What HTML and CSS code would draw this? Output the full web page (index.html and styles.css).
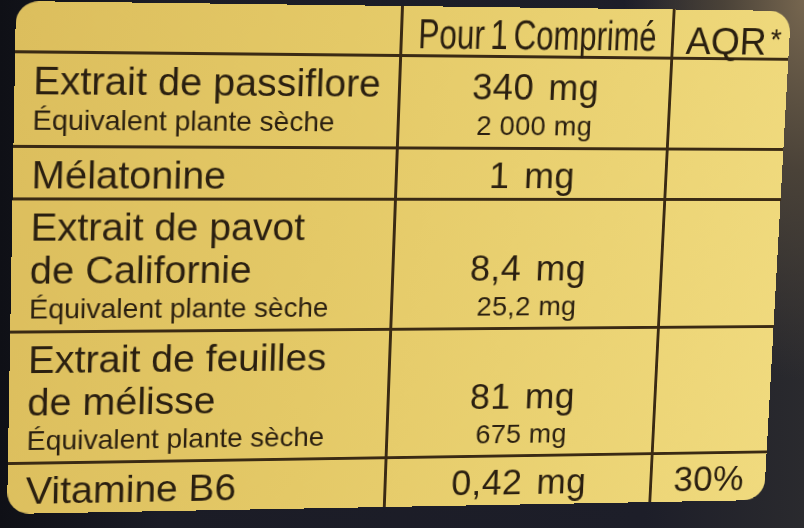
FILE: index.html
```html
<!DOCTYPE html>
<html lang="fr">
<head>
<meta charset="utf-8">
<title>Composition</title>
<link rel="stylesheet" href="styles.css">
</head>
<body>
<div class="card">
  <div class="cell"></div>
  <div class="cell head"><span class="head-text">Pour 1 Comprimé</span></div>
  <div class="cell head aqr end"><span>AQR<span class="ast">*</span></span></div>

  <div class="cell label"><div class="big">Extrait de passiflore</div><div class="small">Équivalent plante sèche</div></div>
  <div class="cell value low"><div class="big">340 mg</div><div class="small">2 000 mg</div></div>
  <div class="cell end"></div>

  <div class="cell label"><div class="big">Mélatonine</div></div>
  <div class="cell value"><div class="big">1 mg</div></div>
  <div class="cell end"></div>

  <div class="cell label"><div class="big">Extrait de pavot</div><div class="big">de Californie</div><div class="small">Équivalent plante sèche</div></div>
  <div class="cell value offset"><div class="big">8,4 mg</div><div class="small">25,2 mg</div></div>
  <div class="cell end"></div>

  <div class="cell label"><div class="big">Extrait de feuilles</div><div class="big">de mélisse</div><div class="small">Équivalent plante sèche</div></div>
  <div class="cell value offset"><div class="big">81 mg</div><div class="small">675 mg</div></div>
  <div class="cell end"></div>

  <div class="cell label bottom"><div class="big">Vitamine B6</div></div>
  <div class="cell value bottom"><div class="big">0,42 mg</div></div>
  <div class="cell value end bottom"><div class="big">30%</div></div>
</div>
</body>
</html>
```
FILE: styles.css
```css
html, body {
  margin: 0;
  padding: 0;
}

body {
  width: 804px;
  height: 528px;
  overflow: hidden;
  font-family: "Liberation Sans", Arial, sans-serif;
  color: #2a1f10;
  background:
    radial-gradient(ellipse 180px 380px at 100% 0%, #76664f 0%, #4a4238 45%, rgba(40, 38, 40, 0) 100%),
    linear-gradient(90deg, #0f1016 0%, #1b1c26 20%, #1d1e29 80%, #2a2a2e 100%);
}

.card {
  width: 780px;
  height: 512px;
  box-sizing: border-box;
  transform-origin: 0 0;
  transform: matrix3d(1.044104, 0.013523, 0, 0.0000638615,
                      -0.0172287, 1.027608, 0, 0.0000499121,
                      0, 0, 1, 0,
                      16, 1, 0, 1);
  display: grid;
  grid-template-columns: 381px 278px 121px;
  grid-template-rows: 51px 93px 52px 133px 133px 50px;
  border-radius: 22px;
  overflow: hidden;
  background: linear-gradient(95deg, #dcbe5d 0%, #e4c967 40%, #ebd374 75%, #f0da7e 100%);
}

.cell {
  box-sizing: border-box;
  min-width: 0;
  padding-top: 5px;
  border-right: 3px solid #3a2a14;
  border-bottom: 3px solid #3a2a14;
}

.cell.end {
  border-right: none;
}

.cell.bottom {
  border-bottom: none;
}

.label {
  padding-left: 18px;
}

.big {
  font-size: 39px;
  line-height: 43px;
  white-space: nowrap;
}

.small {
  font-size: 28px;
  line-height: 36px;
  white-space: nowrap;
}

.value {
  text-align: center;
}

.value .big {
  font-size: 37px;
  letter-spacing: 0.5px;
  word-spacing: 4px;
}

.value .small {
  letter-spacing: 0.3px;
}

.value.low {
  padding-top: 8px;
}

.value.offset {
  padding-top: 48px;
}

.head {
  display: flex;
  justify-content: center;
  align-items: flex-start;
  padding-top: 8px;
  font-size: 42px;
  line-height: 40px;
  white-space: nowrap;
}

.head-text {
  display: inline-block;
  flex: none;
  transform: scaleX(0.76);
  word-spacing: -4px;
}

.aqr {
  font-size: 39px;
  line-height: 38px;
  padding-top: 10px;
  padding-left: 4px;
}

.ast {
  font-size: 30px;
  vertical-align: 6px;
  margin-left: 4px;
}
```
